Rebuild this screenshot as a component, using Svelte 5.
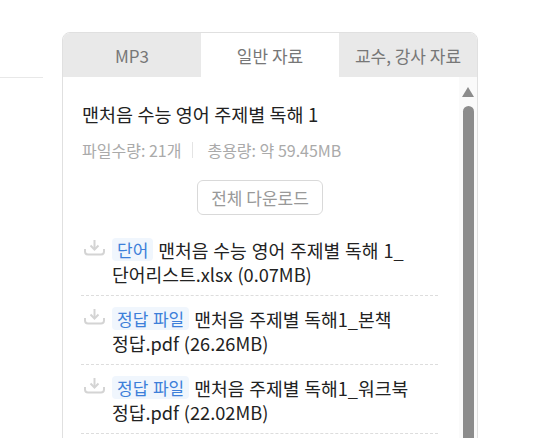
<script lang="ts">
  const tabs = ['MP3', '일반 자료', '교수, 강사 자료'];
  let active = $state(1);

  const files = [
    { tag: '단어', lines: ['맨처음 수능 영어 주제별 독해 1_', '단어리스트.xlsx (0.07MB)'] },
    { tag: '정답 파일', lines: ['맨처음 주제별 독해1_본책', '정답.pdf (26.26MB)'] },
    { tag: '정답 파일', lines: ['맨처음 주제별 독해1_워크북', '정답.pdf (22.02MB)'] },
  ];
</script>

<div class="page">
  <div class="side"></div>
  <section class="panel">
    <div class="tabs">
      {#each tabs as tab, i}
        <button class="tab" class:active={i === active} onclick={() => (active = i)}>{tab}</button>
      {/each}
    </div>
    <div class="body">
      <div class="content">
        <h2 class="title">맨처음 수능 영어 주제별 독해 1</h2>
        <p class="meta">
          <span>파일수량: 21개</span>
          <i class="sep"></i>
          <span>총용량: 약 59.45MB</span>
        </p>
        <div class="all">
          <button class="all-btn">전체 다운로드</button>
        </div>
        <ul class="files">
          {#each files as file}
            <li class="file">
              <svg class="icon" viewBox="0 0 21 16" width="21" height="16" aria-hidden="true">
                <path d="M10.5 0v9" />
                <path d="M6.5 5.5l4 4 4-4" />
                <path d="M1 9v2.5a3 3 0 0 0 3 3h13a3 3 0 0 0 3-3V9" />
              </svg>
              <p class="name"><span class="tag">{file.tag}</span>{file.lines[0]}<br />{file.lines[1]}</p>
            </li>
          {/each}
        </ul>
      </div>
      <div class="scrollbar">
        <span class="arrow"></span>
        <span class="thumb"></span>
      </div>
    </div>
  </section>
</div>

<style>
  :global(body) {
    margin: 0;
    background: #fff;
    overflow: hidden;
  }

  .page {
    display: flex;
    height: 438px;
    overflow: hidden;
    font-family: "Noto Sans CJK KR", "Noto Sans", sans-serif;
    padding-top: 32px;
    box-sizing: border-box;
  }

  .side {
    width: 43px;
    height: 45px;
    margin-right: 19px;
    border-bottom: 1px solid #e8e8e8;
    box-sizing: content-box;
  }

  .panel {
    width: 416px;
    height: 440px;
    box-sizing: border-box;
    border: 1px solid #e0e0e0;
    border-radius: 8px 8px 0 0;
    overflow: hidden;
    flex-shrink: 0;
  }

  .tabs {
    display: grid;
    grid-template-columns: repeat(3, 1fr);
    height: 44px;
  }

  .tab {
    border: none;
    padding: 0;
    font: inherit;
    font-size: 17px;
    color: #777;
    background: #e9e9e9;
    white-space: nowrap;
    cursor: pointer;
  }

  .tab.active {
    background: #fff;
  }

  .body {
    display: flex;
  }

  .content {
    flex: 1;
    min-width: 0;
    padding: 24px 0 0 18px;
  }

  .title {
    margin: 0 0 0 1px;
    font-size: 18.5px;
    font-weight: 400;
    line-height: 26px;
    word-spacing: 0.2px;
    color: #222;
  }

  .meta {
    display: flex;
    align-items: center;
    margin: 12px 0 0 1px;
    font-size: 16px;
    line-height: 22px;
    color: #aaa;
  }

  .sep {
    width: 1px;
    height: 16px;
    margin: 0 14px 0 11px;
    background: #e4e4e4;
  }

  .all {
    display: flex;
    margin-top: 19px;
    padding-left: 116px;
  }

  .all-btn {
    width: 126px;
    height: 35px;
    padding: 0;
    border: 1px solid #d9d9d9;
    border-radius: 6px;
    background: #fff;
    font: inherit;
    font-size: 17px;
    color: #999;
    white-space: nowrap;
  }

  .files {
    list-style: none;
    margin: 12px 0 0;
    padding: 0;
    width: 357px;
  }

  .file {
    display: flex;
    gap: 7px;
    height: 69px;
    box-sizing: border-box;
    padding-top: 11px;
    padding-left: 3px;
    border-bottom: 1px dashed #ddd;
  }

  .icon {
    flex-shrink: 0;
    margin-top: 2px;
    fill: none;
    stroke: #d4d4d4;
    stroke-width: 2;
  }

  .name {
    margin: 0;
    font-size: 18.2px;
    line-height: 24px;
    word-spacing: 0.8px;
    color: #222;
    white-space: nowrap;
  }

  .tag {
    display: inline-block;
    vertical-align: top;
    height: 23px;
    line-height: 24px;
    padding: 0 5px;
    margin-right: 5px;
    border-radius: 4px;
    background: #f0f6fd;
    font-size: 17px;
    color: #3d7fd9;
  }

  .scrollbar {
    width: 18px;
    flex-shrink: 0;
    display: flex;
    flex-direction: column;
    align-items: center;
    background: #fafafa;
    height: 400px;
  }

  .arrow {
    width: 0;
    height: 0;
    margin-top: 10px;
    border-left: 6.5px solid transparent;
    border-right: 6.5px solid transparent;
    border-bottom: 10px solid #8c8c8c;
  }

  .thumb {
    width: 11px;
    flex: 1;
    margin-top: 9px;
    border-radius: 6px 6px 0 0;
    background: #8c8c8c;
  }
</style>
